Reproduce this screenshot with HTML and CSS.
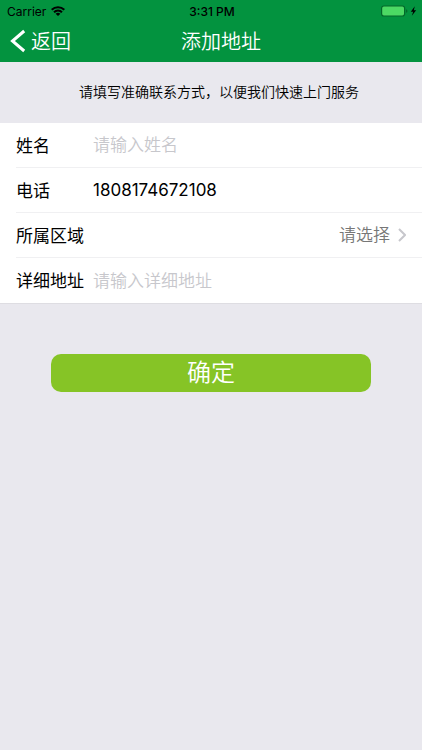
FILE: index.html
```html
<!DOCTYPE html>
<html lang="zh-CN">
<head>
<meta charset="utf-8">
<meta name="viewport" content="width=device-width, initial-scale=1">
<title>添加地址</title>
<link rel="stylesheet" href="styles.css">
</head>
<body>
<header class="header">
  <div class="status">
    <div class="carrier">
      <span>Carrier</span>
      <svg class="wifi" viewBox="0 0 14 10" aria-hidden="true">
        <path d="M0 3.1A10 10 0 0 1 14 3.1L12.6 4.6A8 8 0 0 0 1.4 4.6Z"/>
        <path d="M2.3 5.5A6.8 6.8 0 0 1 11.7 5.5L10.3 7A4.8 4.8 0 0 0 3.7 7Z"/>
        <path d="M4.6 7.8A3.5 3.5 0 0 1 9.4 7.8L7 10Z"/>
      </svg>
    </div>
    <time class="clock">3:31 PM</time>
    <svg class="battery" viewBox="0 0 36 12" aria-hidden="true">
      <rect x="0.6" y="1" width="23" height="10" rx="2.2" fill="#4cd964" stroke="#04682a" stroke-width="1.2"/>
      <path d="M25 4.2Q26.5 4.6 26.5 6T25 7.8Z" fill="#04682a"/>
      <path d="M33.8 1.2L29.8 6.7H32.2L30.8 10.8L35.2 5.2H32.8Z" fill="#000"/>
    </svg>
  </div>
  <nav class="nav">
    <a class="back" href="#">
      <svg class="back-icon" viewBox="0 0 16 24" aria-hidden="true"><path d="M14.2 2L2.5 12L14.2 22"/></svg>
      <span>返回</span>
    </a>
    <h1 class="title">添加地址</h1>
  </nav>
</header>
<main>
  <p class="notice">请填写准确联系方式，以便我们快速上门服务</p>
  <form>
    <div class="fields">
      <div class="row">
        <label class="label" for="name">姓名</label>
        <input class="control" id="name" type="text" placeholder="请输入姓名">
      </div>
      <div class="row">
        <label class="label" for="phone">电话</label>
        <input class="control" id="phone" type="tel" value="1808174672108">
      </div>
      <div class="row">
        <label class="label" for="area">所属区域</label>
        <select class="control area" id="area"><option>请选择</option></select>
        <svg class="chevron" viewBox="0 0 8 14" aria-hidden="true"><path d="M1 1L7 7L1 13"/></svg>
      </div>
      <div class="row">
        <label class="label" for="address">详细地址</label>
        <input class="control" id="address" type="text" placeholder="请输入详细地址">
      </div>
    </div>
    <div class="actions"><button class="submit" type="button">确定</button></div>
  </form>
</main>
</body>
</html>
```
FILE: styles.css
```css
* {
  box-sizing: border-box;
}

body {
  margin: 0;
  background: #e9e8ee;
  color: #000;
  font-family: Inter, "Noto Sans CJK SC", sans-serif;
}

.header {
  background: #03933f;
}

.status {
  display: grid;
  grid-template-columns: 1fr auto 1fr;
  align-items: center;
  height: 22px;
  padding: 0 5px 0 7px;
  font-size: 12px;
}

.carrier {
  display: flex;
  align-items: center;
  gap: 5px;
}

.wifi {
  width: 14px;
  height: 10px;
}

.clock {
  font-weight: 500;
}

.battery {
  justify-self: end;
  width: 36px;
  height: 12px;
}

.nav {
  display: grid;
  grid-template-columns: 1fr auto 1fr;
  align-items: center;
  height: 40px;
  padding: 0 0 3px 20px;
  color: #fff;
  font-size: 20px;
  font-weight: 350;
}

.back {
  display: flex;
  align-items: center;
  gap: 5px;
  margin-left: -10px;
  color: inherit;
  text-decoration: none;
}

.back-icon {
  width: 16px;
  height: 24px;
  fill: none;
  stroke: #fff;
  stroke-width: 3;
}

.title {
  margin: 0;
  font-size: 20px;
  font-weight: 350;
}

.notice {
  margin: 0;
  padding: 19px 8px 21px 24px;
  font-size: 14px;
  font-weight: 350;
  line-height: 21px;
  text-align: center;
}

.fields {
  padding-left: 16px;
  border-bottom: 1px solid #dedde2;
  background: #fff;
}

.row {
  display: flex;
  align-items: center;
  height: 45px;
  padding-right: 16px;
  border-bottom: 1px solid #f0f0f2;
  font-size: 17px;
}

.row:last-child {
  border-bottom: 0;
}

.label {
  flex: none;
  width: 77px;
  padding-bottom: 2px;
}

.control {
  flex: 1;
  min-width: 0;
  height: 44px;
  padding: 0;
  border: 0;
  outline: 0;
  background: transparent;
  color: #000;
  font: inherit;
}

.control::placeholder {
  color: #c7c7cc;
  font-weight: 350;
  opacity: 1;
}

.area {
  appearance: none;
  color: #777;
  font-weight: 350;
  text-align-last: right;
}

.chevron {
  flex: none;
  width: 8px;
  height: 14px;
  margin-left: 8px;
  fill: none;
  stroke: #c7c7cc;
  stroke-width: 2;
}

.actions {
  padding: 50px 51px 0;
}

.submit {
  display: block;
  width: 100%;
  height: 38px;
  padding: 0;
  border: 0;
  border-radius: 10px;
  background: #86c426;
  color: #fff;
  font-family: inherit;
  font-size: 24px;
  font-weight: 350;
  line-height: 38px;
}
```
